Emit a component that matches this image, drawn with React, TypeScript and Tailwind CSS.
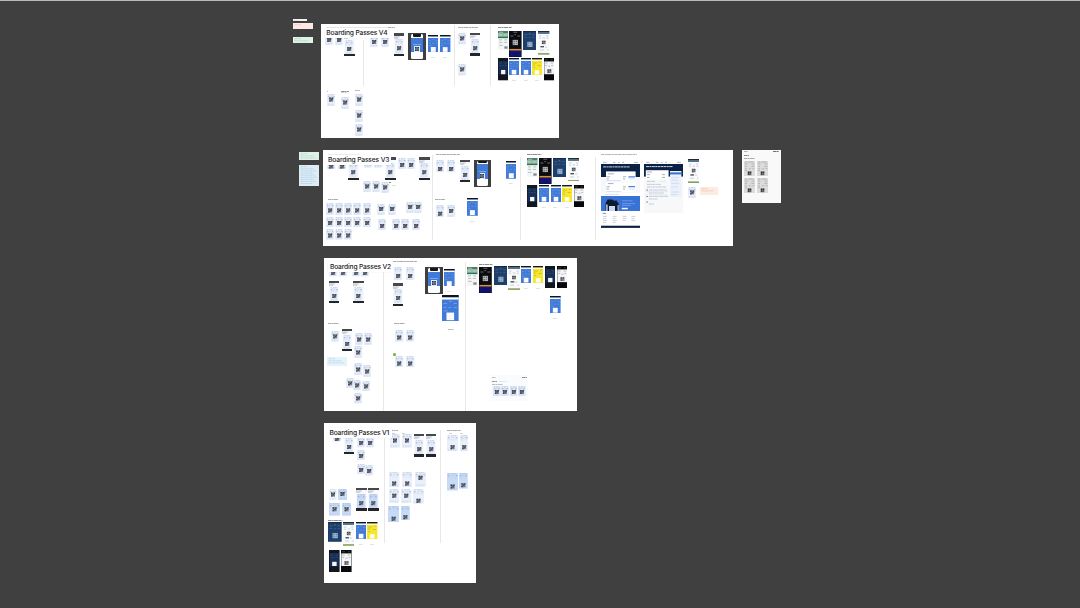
import type { ReactNode } from "react";

type Box = [x: number, y: number, w: number, h: number];

function Place({ box, className = "", children }: { box: Box; className?: string; children?: ReactNode }) {
  const [left, top, width, height] = box;
  return (
    <div className={`absolute overflow-hidden ${className}`} style={{ left, top, width, height }}>
      {children}
    </div>
  );
}

function Qr({ className = "size-[4px]" }: { className?: string }) {
  return (
    <svg viewBox="0 0 9 9" className={`shrink-0 ${className}`} fill="#2b2f38">
      <rect width="9" height="9" fill="#8b8f98" />
      <path d="M0 0h3v3H0zM6 0h3v3H6zM0 6h3v3H0zM4 1h1v2H4zM4 4h3v1H4zM1 4h2v1H1zM7 5h2v1H7zM4 6h1v3H4zM6 7h2v2H6z" />
    </svg>
  );
}

/* Route, airport codes and passenger rows above and below the code */
function TicketArt({ qrX, qrY, w, h, tone }: { qrX: number; qrY: number; w: number; h: number; tone: string }) {
  const q = 4;
  return (
    <svg viewBox={`0 0 ${w} ${h}`} className="block size-full" fill="none">
      <rect width={w} height={h} fill={tone} />
      <path d={`M${w * 0.12} .8H${w * 0.24}M${w * 0.36} .8H${w * 0.82}`} stroke="#98a6c2" strokeWidth=".5" strokeDasharray="1.2 .4" />
      <path d={`M.8 2.8h1.8M${w - 2.6} 2.8h1.8`} stroke="#8b9cc0" strokeWidth=".7" />
      <path d={`M${w * 0.36} 3.2Q${w / 2} 1.6 ${w * 0.64} 3.2`} stroke="#a6bbe4" strokeWidth=".4" />
      <path d={`M.8 4.8H${w - 0.8}`} stroke="#c3cfe8" strokeWidth=".5" strokeDasharray="1.4 .9" />
      <path d={`M.8 ${h - 1.8}H${w - 0.8}M.8 ${h - 0.7}H${w - 2}`} stroke="#c0cce4" strokeWidth=".5" strokeDasharray="1.6 .8" />
      <rect x={qrX - q / 2} y={qrY - q / 2} width={q} height={q} fill="#777c86" />
      <path
        d={`M${qrX - 2} ${qrY - 2}h1.4v1.4h-1.4zM${qrX + 0.6} ${qrY - 2}h1.4v1.4h-1.4zM${qrX - 2} ${qrY + 0.6}h1.4v1.4h-1.4zM${qrX - 0.4} ${qrY - 0.4}h1.4v1h-1.4z`}
        fill="#3c414b"
      />
    </svg>
  );
}

function Ticket({ at, w = 8.4, h = 12, up = 7.6, tone = "#e9f0fc" }: { at: [number, number]; w?: number; h?: number; up?: number; tone?: string }) {
  return (
    <Place box={[at[0] - w / 2, at[1] - up, w, h]}>
      <TicketArt qrX={w / 2} qrY={up} w={w} h={h} tone={tone} />
    </Place>
  );
}

function Phone({ box, tone = "#e9f0fc" }: { box: Box; tone?: string }) {
  const w = box[2];
  const inner = box[3] - 8;
  return (
    <Place box={box} className="flex flex-col bg-[#f8fafd]">
      <div className="h-[2.4px] shrink-0 bg-[#46484b]" />
      <svg viewBox="0 0 10 3.4" className="block h-[3.4px] w-full shrink-0" preserveAspectRatio="none">
        <path d="M0 1H5.5M0 2.2H4" stroke="#9b9ea5" strokeWidth=".6" />
      </svg>
      <div className="min-h-0 flex-1 px-[1px]">
        <TicketArt qrX={(w - 2) / 2} qrY={inner * 0.63} w={w - 2} h={inner} tone={tone} />
      </div>
      <div className="h-[2.2px] shrink-0 bg-[#232529]" />
    </Place>
  );
}

function BluePass({ box, caption = true }: { box: Box; caption?: boolean }) {
  const [x, y, w, h] = box;
  const sq = w * 0.46;
  const foot = w > 12 ? 1.4 : 0.7;
  return (
    <>
      <Place box={box}>
        <svg viewBox={`0 0 ${w} ${h}`} className="block size-full" fill="none">
          <rect width={w} height={h} fill="#427bd7" />
          <rect width={w} height={h * 0.09} fill="#101318" />
          <rect y={h * 0.09} width={w} height={h * 0.08} fill="#fff" />
          <path
            d={`M${w * 0.42} ${h * 0.24}h${w * 0.18}M${w * 0.1} ${h * 0.32}h${w * 0.2}M${w * 0.7} ${h * 0.32}h${w * 0.2}M${w * 0.1} ${h * 0.47}h${w * 0.15}M${w * 0.4} ${h * 0.47}h${w * 0.16}M${w * 0.72} ${h * 0.47}h${w * 0.18}M${w * 0.1} ${h * 0.6}h${w * 0.25}`}
            stroke="#78a3ea"
            strokeWidth={w * 0.05}
          />
          <rect x={(w - sq) / 2} y={h - sq - foot} width={sq} height={sq} fill="#f8faff" />
        </svg>
      </Place>
      {caption && <Mark box={[x + w * 0.28, y + h + 4.6, w * 0.42, 0.6]} tone="#bfbfc1" />}
    </>
  );
}

function FramedPhone({ box }: { box: Box }) {
  return (
    <Place box={box} className="bg-[#3d3f41] px-[3px] pt-[1.4px] pb-[1.2px]">
      <div className="flex h-full flex-col items-stretch overflow-hidden rounded-[1.5px] bg-white">
        <div className="mx-[1.5px] h-[2.2px] shrink-0 rounded-b-[1px] bg-[#15171a]" />
        <div className="h-[1px] shrink-0" />
        <div className="flex h-[61%] flex-col items-center justify-end bg-[#427bd7] pb-[.6px]">
          <div className="mb-[1.6px] h-[.6px] w-[65%] bg-[#7da6ea]" />
          <div className="flex items-center justify-center bg-[#dfeafc] p-[.8px]">
            <Qr />
          </div>
        </div>
      </div>
    </Place>
  );
}

function GreenPass({ box }: { box: Box }) {
  return (
    <Place box={box}>
      <svg viewBox="0 0 10 19" className="block size-full" preserveAspectRatio="none">
        <rect width="10" height="19" fill="#f3f6f5" />
        <rect width="10" height="2.6" fill="#4b8068" />
        <rect y="2.6" width="10" height="3" fill="#93b9a2" />
        <rect y="5.6" width="10" height="1.6" fill="#287452" />
        <path d="M1 1.3h4M1 4h3M5.5 4h3" stroke="#dbe9e1" strokeWidth=".6" />
        <path d="M1 9h2.8M6 9h2.8M1 11.5h3M5.6 11.5h3M1 14.5h3.5" stroke="#a3a9b0" strokeWidth=".7" />
        <rect x="6" y="15.5" width="3.2" height="2.4" fill="#8a8c90" />
      </svg>
    </Place>
  );
}

function BlackPass({ box }: { box: Box }) {
  return (
    <Place box={box}>
      <svg viewBox="0 0 13 26" className="block size-full" preserveAspectRatio="none">
        <rect width="13" height="26" fill="#0b0c10" />
        <path d="M4.5 1.2h4M1.5 5h3M8.5 5h3M5.6 3.6h1.6" stroke="#a9abb0" strokeWidth=".6" />
        <rect x="3.8" y="8.8" width="5.4" height="5.2" fill="#b6b6b8" />
        <path d="M4.6 9.6h1.4v1.4H4.6zM7 9.6h1.4v1.4H7zM4.6 11.9h1.4v1.4H4.6zM7 12h1v1H7z" fill="#66686c" />
        <rect x=".4" y="17.8" width="12.2" height="1.6" fill="#d98f3e" />
        <rect x=".6" y="19.8" width="11.8" height="5.6" fill="#13137c" />
        <path d="M2 22h9M3.5 24h6" stroke="#0d0d52" strokeWidth=".6" />
      </svg>
    </Place>
  );
}

function NavyPass({ box }: { box: Box }) {
  return (
    <Place box={box}>
      <svg viewBox="0 0 13 19" className="block size-full" preserveAspectRatio="none">
        <rect width="13" height="19" fill="#1d3f6c" />
        <rect width="13" height="1" fill="#122a4c" />
        <path d="M1.5 3.6h3M8.5 3.6h3M1.5 6.2h2.4M5.4 6.2h2M9 6.2h2.4" stroke="#47709f" strokeWidth=".6" />
        <path d="M5.8 2.8h1.4" stroke="#c8a24b" strokeWidth=".6" />
        <rect x="4.3" y="10.6" width="5" height="5" fill="#a4b8d1" />
        <path d="M5 11.3h1.3v1.3H5zM7.3 11.3h1.3v1.3H7.3zM5 13.6h1.3v1.3H5zM7.2 13.4h1v1h-1z" fill="#5c7a9e" />
      </svg>
    </Place>
  );
}

function WhitePass({ box }: { box: Box }) {
  return (
    <Place box={box}>
      <svg viewBox="0 0 11.4 23.7" className="block size-full" preserveAspectRatio="none">
        <rect width="11.4" height="23.7" fill="#f9fafb" />
        <rect width="11.4" height="1.2" fill="#1e2a3a" />
        <rect y="1.2" width="11.4" height="1.6" fill="#36566f" />
        <path d="M1 5h2.4M8 5h2.4M1 7.2h2M4.6 7h2.4M8.4 7.2h2" stroke="#a5b3c5" strokeWidth=".6" />
        <rect x="3.8" y="9.6" width="3.8" height="3.6" fill="#7c7d81" />
        <path d="M4.2 10h1v1h-1zM6.2 10h1v1h-1zM4.2 12h1v1h-1z" fill="#393a3e" />
        <rect x="2.4" y="15.2" width="3.6" height="1.1" fill="#26282e" />
        <path d="M7 16h2M9 19h1.4M2 19h4" stroke="#a9b5c4" strokeWidth=".6" />
        <rect y="22.2" width="11.4" height="1.4" fill="#769448" />
      </svg>
    </Place>
  );
}

function DarkPass({ box }: { box: Box }) {
  return (
    <Place box={box}>
      <svg viewBox="0 0 10 22" className="block size-full" preserveAspectRatio="none">
        <rect width="10" height="22" fill="#12161d" />
        <rect x=".6" y="3" width="8.8" height="13.4" fill="#182f55" />
        <path d="M1.6 5h2M6.4 5h2M1.6 7.4h1.6M4.2 7.4h1.6M6.8 7.4h1.6" stroke="#3f6090" strokeWidth=".5" />
        <rect x="3" y="11.8" width="4.2" height="4.2" fill="#f2f6fb" />
      </svg>
    </Place>
  );
}

function YellowPass({ box }: { box: Box }) {
  return (
    <>
      <Place box={box}>
        <svg viewBox="0 0 10 17" className="block size-full" preserveAspectRatio="none">
          <rect width="10" height="17" fill="#f6e62c" />
          <rect width="10" height="1.6" fill="#17181a" />
          <rect y="1.6" width="10" height="1.4" fill="#fdfbe2" />
          <path d="M.8 5h4M6.8 4h2M.8 7h2.2M5.6 7.4h3M1 9.5h2" stroke="#b8aa2b" strokeWidth=".6" />
          <rect x="2.8" y="12" width="4.5" height="4.3" fill="#fffdeb" />
        </svg>
      </Place>
      <Mark box={[box[0] + 3, box[1] + box[3] + 4.6, 4, 0.6]} tone="#bfbfc1" />
    </>
  );
}

function MonoPass({ box }: { box: Box }) {
  return (
    <Place box={box}>
      <svg viewBox="0 0 10 22" className="block size-full" preserveAspectRatio="none">
        <rect width="10" height="22" fill="#08090b" />
        <rect x=".3" y="3.4" width="9.4" height="12.6" fill="#f4f5f7" />
        <path d="M.9 1.8h3M6.5 1.8h2" stroke="#6c6e73" strokeWidth=".5" />
        <path d="M1.2 5h2.2M6.4 5h2.4M1.2 7.4h1.8M4.2 8.2h2M7 7.4h1.8" stroke="#9a9da4" strokeWidth=".6" />
        <rect x="3.2" y="11" width="4" height="4" fill="#85878c" />
        <path d="M3.6 11.4h1.1v1.1H3.6zM5.7 11.4h1.1v1.1H5.7zM3.6 13.4h1.1v1.1H3.6z" fill="#3a3b3f" />
      </svg>
    </Place>
  );
}

/* Caption lines far below reading size */
function Mark({ box, tone = "#9b9b9d" }: { box: Box; tone?: string }) {
  const [, , w, h] = box;
  return (
    <div className="absolute" style={{ left: box[0], top: box[1], width: w, height: h }}>
      <svg viewBox={`0 0 ${w} ${h}`} className="block size-full">
        <path d={`M0 ${h / 2}H${w}`} stroke={tone} strokeWidth={h} strokeDasharray="3 .4 2.2 .4 4 .5" />
      </svg>
    </div>
  );
}

function Divider({ x, y, h }: { x: number; y: number; h: number }) {
  return <Place box={[x, y, 1, h]} className="bg-[#e8e8e9]" />;
}

function Sticky({ box, className, lines }: { box: Box; className: string; lines: string }) {
  const [, , w, h] = box;
  const rows = Math.max(1, Math.floor((h - 1.5) / 2.1));
  return (
    <Place box={box} className={className}>
      <svg viewBox={`0 0 ${w} ${h}`} className="block size-full">
        {Array.from({ length: rows }, (_, i) => (
          <path
            key={i}
            d={`M1.5 ${1.7 + i * 2.1}H${i === 0 ? w * 0.4 : w - 2 - ((i * 3) % 5)}`}
            stroke={lines}
            strokeWidth=".5"
            strokeDasharray="2.4 .4 1.4 .4"
          />
        ))}
      </svg>
    </Place>
  );
}

function Title({ x, y, children }: { x: number; y: number; children: ReactNode }) {
  return (
    <div
      className="absolute flex h-[10.6px] w-[64.6px] items-center justify-center bg-white font-['Inter',sans-serif] text-[6.7px] leading-none font-medium tracking-[-0.16px] whitespace-nowrap text-[#1c1c1e] shadow-[0_0_1px_rgba(0,0,0,0.12)]"
      style={{ left: x, top: y }}
    >
      {children}
    </div>
  );
}

function ResultsPage({ box }: { box: Box }) {
  return (
    <Place box={box}>
      <svg viewBox="0 0 39.3 67" className="block size-full" fill="none">
        <rect width="39.3" height="67" fill="#fff" />
        <path d="M2 1.4h3.5M12 1.4h2.4M17 1.4h1.6M21 1.4h2M33 1.4h4" stroke="#7f8b9f" strokeWidth=".6" />
        <rect y="3" width="39.3" height="13" fill="#0c2244" />
        <path d="M2.2 5.9H29" stroke="#e6ebf3" strokeWidth=".9" strokeDasharray="3 .4 2 .4" />
        <path d="M0 16h39.3v16H0z" fill="#f6f8fb" />
        <rect x="5" y="10.4" width="29.6" height="10" fill="#fff" />
        <rect x="5" y="21.8" width="29.6" height="9.4" fill="#fff" />
        <path d="M7 12.8h6M7 22.6h5.6M5.5 15.8h3.4M22 15.8h3M5.5 18h2.4M22 18h2M5.5 25.8h3.4M22 25.8h3M5.5 28h2.4M22 28h2" stroke="#6e7b90" strokeWidth=".6" />
        <path d="M27.4 15.8H34M27.4 25.6H34" stroke="#4d82dc" strokeWidth="1.2" />
        <path d="M27.4 18H34M27.4 28H34M5.5 19.6H20M5.5 30.6H20M4 33.4h14" stroke="#a9c1ea" strokeWidth=".5" />
        <rect y="35" width="39.3" height="15" fill="#3772d4" />
        <path d="M4.6 50V42l2-3.6h4.8l1.8 1.6 2-.8 2.6 3.8V50z" fill="#0d1a31" />
        <path d="M5.2 50V43.4h1.4V50zM8 50V45h6V50zM16.6 50v-6h1V50z" fill="#cbd8ee" />
        <path d="M21 39.8h10.6M21 42.6H34M21 44.4h9" stroke="#8fb2ee" strokeWidth=".6" />
        <rect x="20.8" y="46.8" width="6" height="1.5" fill="#f4f7fd" />
        <path d="M1.6 52.4h3.4" stroke="#41649b" strokeWidth=".7" />
        <path d="M2 55.4h4M11.6 55.4h4M21.6 55.4h4M30.4 55.4h4M2 57.4h3M11.6 57.4h3M21.6 57.4h4M30.4 57.4h3M2 59.4h4M11.6 59.4h4M21.6 59.4h3M30.4 59.4h4M2 61.4h3M11.6 61.4h3" stroke="#9aa4b3" strokeWidth=".5" />
        <rect y="64.7" width="39.3" height="2.2" fill="#0c2244" />
      </svg>
    </Place>
  );
}

function SummaryPage({ box }: { box: Box }) {
  return (
    <Place box={box}>
      <svg viewBox="0 0 39.3 52" className="block size-full" fill="none">
        <rect width="39.3" height="52" fill="#f6f8fa" />
        <rect width="39.3" height="3" fill="#fff" />
        <path d="M2 1.4h3.5M12 1.4h2.4M17 1.4h1.6M21 1.4h2M33 1.4h4" stroke="#7f8b9f" strokeWidth=".6" />
        <rect y="3" width="39.3" height="12.6" fill="#0c2244" />
        <path d="M2 5.6h27" stroke="#e6ebf3" strokeWidth=".9" strokeDasharray="3 .4 2 .4" />
        <rect x="1.8" y="9.2" width="22.8" height="9.4" fill="#fff" />
        <path d="M3 11h5M3 13.6h3M18 13.6h3M3 16.4h2.6M18 16.4h3" stroke="#6e7b90" strokeWidth=".6" />
        <rect x="26" y="10" width="11.4" height="26" fill="#ebf1fb" />
        <rect x="26" y="11.4" width="11.4" height="2" fill="#3470d6" />
        <path d="M27 16.4h8M27 19h6.6M27 22.4h8M27 26h7M27 31h8M27 33.6h6" stroke="#b9cbea" strokeWidth=".5" />
        <path d="M3 20.4h8M3 23.4h14M3 26h19M5 29h18M5 32h15M5 35.4h19M5 38h9M5 43h5" stroke="#919bac" strokeWidth=".5" strokeDasharray="3 .4 1.6 .4" />
        <path d="M2.6 28.4h1v1h-1zM2.6 35h1v1h-1zM2.6 40.4h1v1h-1z" fill="#283243" />
        <path d="M16 20.4h6M1.8 30.6h22M1.8 33.8h22" stroke="#c6d6ef" strokeWidth=".4" />
      </svg>
    </Place>
  );
}

function Competitors({ x, y }: { x: number; y: number }) {
  return (
    <>
      <GreenPass box={[x, y, 10.5, 18.8]} />
      <BlackPass box={[x + 11.7, y, 12.6, 26.2]} />
      <NavyPass box={[x + 25.2, y, 13.2, 19.4]} />
      <WhitePass box={[x + 40.6, y, 11.4, 23.7]} />
      <DarkPass box={[x, y + 27.3, 10.2, 22.3]} />
      <BluePass box={[x + 11.7, y + 27.3, 10, 17.2]} />
      <BluePass box={[x + 23.2, y + 27.3, 10, 17.2]} />
      <YellowPass box={[x + 34.5, y + 27.3, 10, 17.2]} />
      <MonoPass box={[x + 46.2, y + 27.3, 10.3, 22.3]} />
    </>
  );
}

function tickets(points: [number, number][], props: { w?: number; h?: number; up?: number; tone?: string } = {}) {
  return points.map((p) => <Ticket key={p.join()} at={p} {...props} />);
}

function BoardV4() {
  return (
    <>
      <Place box={[320.6, 23.6, 238.2, 114.9]} className="bg-white" />
      <Divider x={363} y={40} h={46} />
      <Divider x={454} y={25} h={61} />
      <Divider x={490} y={25} h={61} />
      <Mark box={[326, 27, 62, 0.6]} tone="#d0d0d1" />
      <Mark box={[388, 26.9, 7, 0.9]} />
      <Mark box={[457.5, 27, 20, 0.9]} />
      <Mark box={[497.6, 27, 14.4, 0.9]} tone="#77777a" />
      {tickets([[329, 40], [338.7, 40], [373.7, 42], [384.7, 42]], { h: 11, up: 6 })}
      <Phone box={[344.3, 34, 10.5, 22.3]} />
      <Phone box={[394.2, 33.4, 10.3, 22.6]} />
      <FramedPhone box={[408.2, 33, 17.6, 26.8]} />
      <BluePass box={[427.8, 34.6, 10.6, 17.6]} />
      <BluePass box={[440.2, 34.6, 10.4, 17.6]} />
      {tickets([[461.7, 38.7], [461.7, 69.8]], { up: 5.4, h: 11.4 })}
      <Phone box={[469.9, 33, 10.5, 22.6]} />
      <Competitors x={497.6} y={31} />
      <Mark box={[327, 91, 1.2, 0.8]} />
      <Mark box={[341, 90.6, 8, 0.9]} tone="#77787a" />
      <Mark box={[341, 92, 6, 0.6]} />
      <Mark box={[354.6, 90.4, 5, 0.8]} />
      {tickets([[331.3, 100], [345.3, 102.7], [358.7, 100], [358.7, 116], [358.7, 129.4]], { up: 5.6, h: 12 })}
      <Title x={324.6} y={27.9}>Boarding Passes V4</Title>
    </>
  );
}

function BoardV3() {
  return (
    <>
      <Place box={[322.8, 150.4, 409.8, 95.2]} className="bg-white" />
      <Divider x={432} y={155} h={85} />
      <Divider x={520} y={157} h={83} />
      <Divider x={595} y={157} h={83} />
      <Mark box={[328, 154, 32, 0.5]} tone="#d0d0d1" />
      <Mark box={[436, 153.8, 24, 0.9]} />
      <Mark box={[527.3, 153.8, 14.4, 0.9]} tone="#77777a" />
      <Mark box={[601, 153.6, 36, 0.8]} />
      <Mark box={[328.2, 198.6, 10, 0.9]} />
      <Mark box={[435.4, 198.6, 10.4, 0.9]} />
      <Ticket at={[331.5, 166.4]} h={4} up={1.6} />
      <Ticket at={[341.9, 166.4]} h={4} up={1.6} />
      {tickets([[368.4, 163], [378.4, 163]], { h: 6.6, up: 1.6 })}
      <Phone box={[348.3, 157.4, 10.6, 22.6]} />
      <Phone box={[385, 157.4, 10.6, 22.6]} />
      <Phone box={[419, 157.4, 10.6, 22.6]} />
      {tickets([[402.3, 165], [411.3, 165]], { up: 7, h: 11 })}
      {tickets([[367, 186.4], [376.3, 186.4], [385.4, 187]], { up: 5.4, h: 11 })}
      <Place box={[389.4, 181.6, 1.6, 1.6]} className="rounded-full bg-[#5f8f45]" />
      <Mark box={[392, 185, 4, 0.6]} tone="#a5bf95" />
      {tickets([330.3, 339, 348, 356.7, 366.7].map((x) => [x, 210.4]), { up: 7.4, h: 12 })}
      {tickets([330.3, 339, 348, 356.7, 366.7].map((x) => [x, 222.6]), { up: 6, h: 10.4 })}
      {tickets([330.3, 339, 348].map((x) => [x, 235.6]), { up: 6.6, h: 10.6 })}
      {tickets([[381, 208.8], [391.7, 208.8], [409.7, 207], [418.2, 207]], { up: 5, h: 11 })}
      {tickets([[382, 226], [395.7, 226], [404.7, 226], [416, 226]], { up: 7, h: 11 })}
      {tickets([[439.7, 169], [450.7, 169]], { up: 9, h: 12 })}
      <Phone box={[459.7, 160, 10.4, 22.2]} />
      <FramedPhone box={[473.6, 159.9, 17.8, 26.8]} />
      <BluePass box={[505.8, 161, 10.6, 17.8]} />
      {tickets([[439.7, 213.8]], { up: 8.8, h: 12 })}
      {tickets([[450.7, 211]], { up: 6, h: 12 })}
      <BluePass box={[467, 198.4, 10.8, 17.8]} />
      <Competitors x={527.4} y={157.8} />
      <ResultsPage box={[601, 161, 39.3, 67]} />
      <SummaryPage box={[643.7, 161, 39.3, 52]} />
      <WhitePass box={[687.7, 159, 11.3, 24]} />
      <Ticket at={[692.3, 192.4]} up={5.4} h={11.4} />
      <Sticky box={[700.2, 187, 18.2, 7.6]} className="bg-[#fdebe2]" lines="#dfa68c" />
      <Title x={326.4} y={154.9}>Boarding Passes V3</Title>
    </>
  );
}

function PrintSheet() {
  const cells: [number, number][] = [[744, 160.8], [756.8, 160.8], [744, 178], [756.8, 178]];
  return (
    <>
      <Place box={[741.8, 150.2, 39.6, 52.6]} className="bg-[#f9f9f9]" />
      <Mark box={[744, 151, 4, 0.8]} />
      <Mark box={[773.4, 150.8, 6, 1.2]} tone="#6b6f75" />
      <Mark box={[743.8, 155, 5.4, 1]} tone="#8d8d8f" />
      <Mark box={[743.8, 157.8, 11, 0.9]} tone="#9a9a9c" />
      {cells.map(([x, y]) => (
        <Place key={`${x}-${y}`} box={[x, y, 11.3, 15.4]}>
          <svg viewBox="0 0 11.3 15.4" className="block size-full" fill="none">
            <rect width="11.3" height="15.4" fill="#dcdcdc" />
            <path d="M1 1h2.4M4.4 1h5M1 3h2.6M7.6 3h2.6M1 5.4h2M7.4 5.4h3M1 7.8h2M5 7.8h2M8.4 7.8h2M1 9.6h2" stroke="#9b9b9b" strokeWidth=".6" />
            <rect x="3.6" y="10.4" width="3.8" height="3.8" fill="#686868" />
            <path d="M4 10.8h1.1v1.1H4zM6 10.8h1.1v1.1H6zM4 12.7h1.1v1.1H4z" fill="#2a2a2a" />
          </svg>
        </Place>
      ))}
    </>
  );
}

function BoardV2() {
  return (
    <>
      <Place box={[324.3, 257.8, 252.5, 153.6]} className="bg-white" />
      <Divider x={382.6} y={262} h={149} />
      <Divider x={464.8} y={262} h={149} />
      <Mark box={[393, 261, 24.4, 0.9]} />
      <Mark box={[479, 263.8, 13.8, 0.9]} tone="#77777a" />
      <Mark box={[328.4, 323, 11, 0.9]} />
      <Mark box={[393.8, 323, 11, 0.9]} />
      {tickets([[333.4, 273.4], [343.4, 273.4], [356.4, 273.4], [365, 273.4]], { up: 6, h: 9.4 })}
      <Phone box={[328.7, 280.8, 10.6, 22.4]} />
      <Phone box={[353.3, 280.8, 10.6, 22.4]} />
      {tickets([[398, 275.8], [410.4, 275.8]], { up: 9, h: 13 })}
      <Phone box={[393, 283.4, 10.4, 22.4]} />
      <FramedPhone box={[425, 267, 17.7, 26.8]} />
      <BluePass box={[444.4, 268.6, 10.6, 17.8]} />
      <BluePass box={[442.2, 294.8, 16.6, 26.6]} caption={false} />
      <Mark box={[448, 328.8, 6, 0.8]} />
      <GreenPass box={[467.3, 267.2, 10.5, 18.8]} />
      <BlackPass box={[478.8, 267, 12.8, 26.2]} />
      <NavyPass box={[493.7, 266.2, 13.2, 19.3]} />
      <WhitePass box={[508, 266.2, 12, 23.9]} />
      <BluePass box={[521.3, 266, 10.2, 17.2]} />
      <YellowPass box={[532.7, 266, 10.3, 17.2]} />
      <DarkPass box={[545, 266, 10.4, 22.2]} />
      <MonoPass box={[556.7, 266, 10.4, 22.2]} />
      <BluePass box={[550.2, 296, 10.6, 17.4]} />
      <Ticket at={[334.7, 336.4]} up={5.4} h={10.6} />
      <Phone box={[342, 329, 10.4, 22.2]} />
      {tickets([[359, 340], [368, 340], [358.4, 352.8], [358.4, 370], [367, 372]], { up: 6.6, h: 12 })}
      {tickets([[350.6, 383.2], [357, 385.2], [365.7, 386.2], [357.8, 398.8]], { up: 5.4, h: 10.4 })}
      <Sticky box={[326.6, 357, 20.2, 8.6]} className="bg-[#e6f3fb]" lines="#9cc6e2" />
      {tickets([[399.4, 337.8], [410.4, 338], [399.4, 363.4], [410.4, 363.4]], { up: 7.6, h: 11.6 })}
      <Place box={[392.8, 353.4, 2.8, 2.8]} className="rounded-full bg-[#6fae3f]" />
      <Place box={[490.8, 375.4, 37.4, 25.4]} className="bg-[#fafbfd]" />
      <Mark box={[491.6, 377, 4, 0.7]} />
      <Mark box={[521.6, 376.8, 5.4, 1.2]} tone="#8d929a" />
      <Mark box={[491.6, 380.8, 5.4, 0.9]} tone="#7f8289" />
      <Mark box={[498.6, 381, 8, 0.6]} tone="#c6d0e2" />
      <Mark box={[491.6, 383.8, 11, 0.8]} tone="#a0a4ab" />
      {tickets([[496.7, 392], [505, 392], [513.4, 392], [521.8, 392]], { up: 6, h: 10.4, w: 7.8, tone: "#e0eafa" })}
      <Title x={328.2} y={261.9}>Boarding Passes V2</Title>
    </>
  );
}

function BoardV1() {
  const blue = "#c6dbf8";
  return (
    <>
      <Place box={[324.3, 423, 152, 160.2]} className="bg-white" />
      <Divider x={384.4} y={430} h={113} />
      <Divider x={440.2} y={430} h={113} />
      <Mark box={[390, 430, 8, 0.9]} />
      <Mark box={[446.8, 430, 14.6, 0.9]} />
      <Mark box={[392, 432.6, 3, 0.6]} />
      <Mark box={[402, 432.6, 3, 0.6]} />
      <Mark box={[449, 432.6, 3, 0.6]} />
      <Mark box={[460, 432.6, 3, 0.6]} />
      <Ticket at={[337.4, 439.2]} up={3} h={5.4} />
      <Phone box={[344, 432, 10.4, 22.4]} />
      {tickets([[361, 443.2], [370, 443.2], [360.7, 455.8], [360.7, 469.8], [369.4, 471.4]], { up: 6, h: 10.4 })}
      {tickets([[395.3, 441], [406.7, 441]], { w: 10, up: 6.6, h: 13.6 })}
      <Phone box={[413.6, 434, 10.6, 22.6]} />
      <Phone box={[425.6, 434, 10.6, 22.6]} />
      <Ticket at={[452.4, 446.8]} w={11.2} up={12.2} h={16.2} />
      <Ticket at={[464, 446.8]} w={8.4} up={12.2} h={16.2} />
      {tickets([[394.4, 483.4], [406.7, 483.4]], { w: 10.4, up: 11.6, h: 15 })}
      <Ticket at={[420.7, 477.8]} w={11} up={5.8} h={14.6} />
      {tickets([[394, 495.8], [406.7, 495.8]], { w: 10.6, up: 6.8, h: 13.8 })}
      <Ticket at={[418.4, 501]} w={11} up={11.8} h={14.6} />
      <Ticket at={[452.4, 487]} w={11.2} up={13.6} h={17.4} tone={blue} />
      <Ticket at={[463.5, 485.6]} w={8.8} up={12.2} h={15.6} tone={blue} />
      <Ticket at={[393.7, 519]} w={11.3} up={12.8} h={16.2} tone={blue} />
      <Ticket at={[405.2, 517.4]} w={8.8} up={11.2} h={14.2} tone={blue} />
      <Ticket at={[332.8, 494.8]} up={5.6} h={11} w={8} tone="#f3f7fd" />
      <Ticket at={[342.4, 494]} w={9} up={5} h={11} tone={blue} />
      <Ticket at={[334.4, 509.3]} w={11.2} up={6.3} h={12.6} tone={blue} />
      <Ticket at={[346.7, 509.3]} w={9.2} up={6.3} h={12.6} tone={blue} />
      <Phone box={[356.4, 488, 10.6, 22.6]} tone={blue} />
      <Phone box={[368.3, 488, 10.6, 22.6]} tone={blue} />
      <Mark box={[328.2, 519.8, 14.4, 0.9]} tone="#77777a" />
      <NavyPass box={[328, 522.2, 13.7, 19.8]} />
      <WhitePass box={[343, 522.2, 11.4, 23.8]} />
      <BluePass box={[356, 522.2, 10.2, 17.2]} />
      <YellowPass box={[367.2, 522.2, 10.4, 17.2]} />
      <DarkPass box={[329, 549.8, 10.6, 22]} />
      <MonoPass box={[341.3, 549.8, 10.6, 22]} />
      <Title x={327} y={427.9}>Boarding Passes V1</Title>
    </>
  );
}

export default function App() {
  return (
    <main className="relative h-[608px] w-[1080px] overflow-hidden border-t border-[#b9bbba] bg-[#404040]">
      <div className="absolute inset-x-0 -top-px h-[608px]">
        <Sticky box={[293, 18.6, 14.4, 2.3]} className="bg-[#f6f0f2]" lines="#cdbcc2" />
        <Sticky box={[293, 23.2, 20, 5.6]} className="bg-[#fce9e3]" lines="#dcb0a4" />
        <Sticky box={[293, 37, 20, 6]} className="bg-[#dcf3e6]" lines="#9cc6b2" />
        <Sticky box={[299, 152, 20, 7.8]} className="bg-[#dff2ea]" lines="#a5c8ba" />
        <Sticky box={[299, 165, 20, 20.8]} className="bg-[#dcedf8]" lines="#a3c1d6" />
        <BoardV4 />
        <BoardV3 />
        <PrintSheet />
        <BoardV2 />
        <BoardV1 />
      </div>
    </main>
  );
}
